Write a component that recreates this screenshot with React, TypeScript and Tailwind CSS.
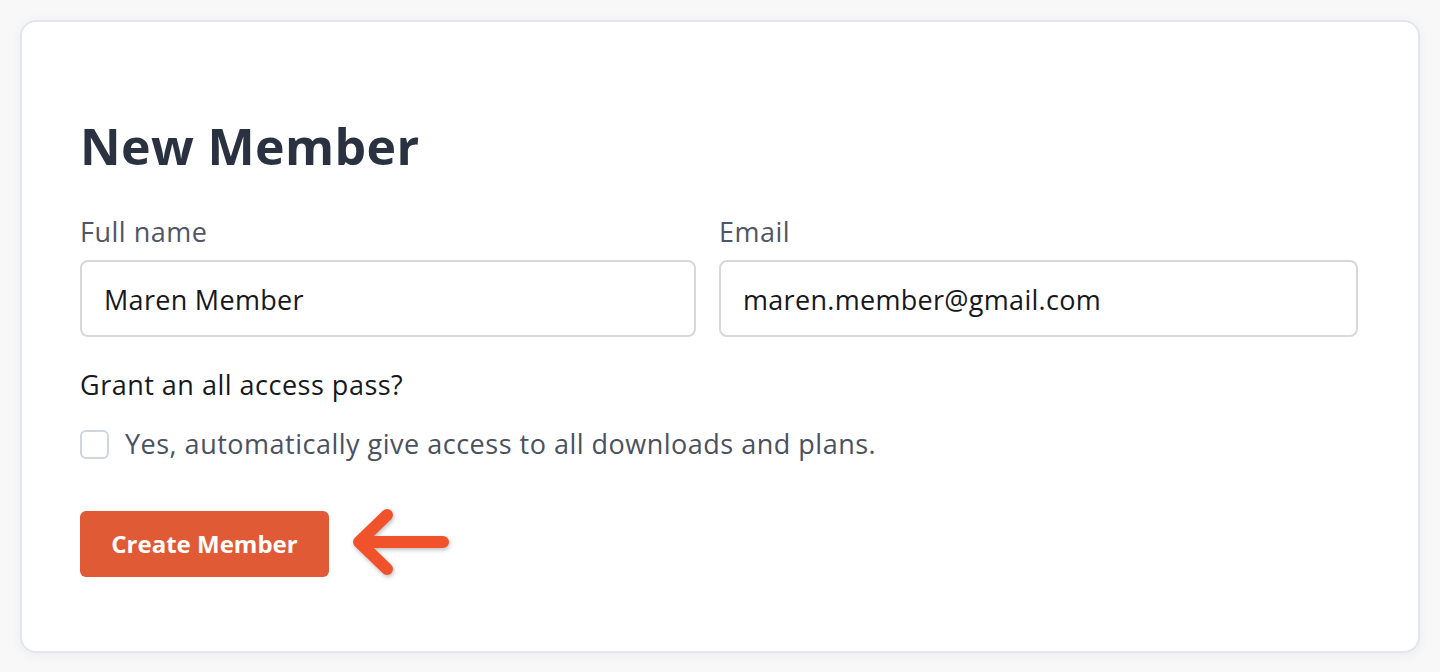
import React from "react";

export default function App() {
  return (
    <div className="w-[1440px] h-[672px] bg-[#f8f8f9] p-[20px] overflow-hidden" style={{ fontFamily: "'Open Sans', 'Noto Sans', sans-serif" }}>
      <div className="h-[633px] bg-white border-2 border-[#e1e6ef] rounded-[16px] shadow-[0_2px_12px_rgba(0,0,0,0.05)] pl-[58px] pr-[60px] pt-[96px]">
        <h1 className="text-[50px] leading-[56px] font-bold text-[#2a3242] tracking-[0.4px]">New Member</h1>
        <div className="mt-[42px] grid grid-cols-[616px_1fr] gap-[23px]">
          <div>
            <div className="text-[27px] leading-[32px] text-[#4f5666] tracking-[0.5px]">Full name</div>
            <div className="mt-[12px] h-[77px] border-2 border-[#d6d8dc] rounded-[8px] flex items-center px-[22px] pt-[3px] text-[27px] text-[#16181d] tracking-[0.3px]">Maren Member</div>
          </div>
          <div>
            <div className="text-[27px] leading-[32px] text-[#4f5666] tracking-[0.5px]">Email</div>
            <div className="mt-[12px] h-[77px] border-2 border-[#d6d8dc] rounded-[8px] flex items-center px-[22px] pt-[3px] text-[27px] text-[#16181d] tracking-[0.3px]">maren.member@gmail.com</div>
          </div>
        </div>
        <div className="mt-[32px] text-[27px] leading-[32px] text-[#16181d] tracking-[0.5px]">Grant an all access pass?</div>
        <div className="mt-[27px] flex items-center gap-[16px]">
          <div className="w-[29px] h-[29px] border-2 border-[#cfd6e2] rounded-[6px]" />
          <div className="text-[27px] leading-[32px] text-[#4a5161] tracking-[0.5px]">Yes, automatically give access to all downloads and plans.</div>
        </div>
        <div className="mt-[49px] flex items-center gap-[22px]">
          <button className="w-[249px] h-[66px] bg-[#e05a36] rounded-[6px] text-white text-[24px] font-bold">Create Member</button>
          <svg width="100" height="70" viewBox="0 0 100 70" className="drop-shadow-[1px_2px_2px_rgba(0,0,0,0.25)]">
            <path d="M92 33 H8 M36 6 L8 33 L36 60" stroke="#f0532b" strokeWidth="12" strokeLinecap="round" strokeLinejoin="round" fill="none" />
          </svg>
        </div>
      </div>
    </div>
  );
}
